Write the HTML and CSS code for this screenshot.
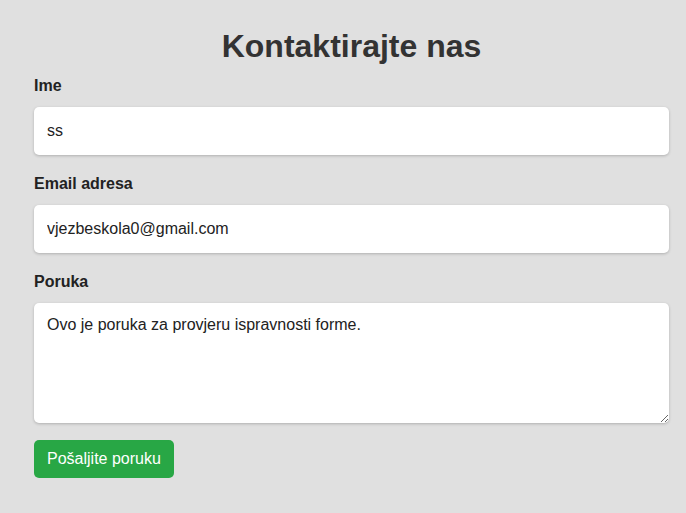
FILE: index.html
```html
<!DOCTYPE html>
<html lang="hr">
<head>
<meta charset="utf-8">
<title>Kontaktirajte nas</title>
<link rel="stylesheet" href="styles.css">
</head>
<body>
<div class="container">
  <h1 class="title">Kontaktirajte nas</h1>
  <form class="form">
    <label class="label" for="ime">Ime</label>
    <input class="field" id="ime" type="text" value="ss">
    <label class="label" for="email">Email adresa</label>
    <input class="field" id="email" type="email" value="vjezbeskola0@gmail.com">
    <label class="label" for="poruka">Poruka</label>
    <textarea class="field area" id="poruka">Ovo je poruka za provjeru ispravnosti forme.</textarea>
    <button class="btn" type="button">Pošaljite poruku</button>
  </form>
</div>
</body>
</html>
```
FILE: styles.css
```css
html, body {
  margin: 0;
  padding: 0;
  background: #e0e0e0;
}
body {
  font-family: "Liberation Sans", Arial, sans-serif;
  color: #222;
}
.container {
  width: 635px;
  padding: 28px 0 0 34px;
}
.title {
  margin: 0 0 12px 0;
  font-size: 32px;
  line-height: 37px;
  font-weight: bold;
  text-align: center;
  color: #333;
}
.form {
  display: flex;
  flex-direction: column;
  align-items: flex-start;
}
.label {
  display: block;
  font-size: 16px;
  line-height: 18px;
  font-weight: bold;
  color: #222;
  margin-bottom: 12px;
}
.field {
  box-sizing: border-box;
  width: 635px;
  height: 48px;
  margin: 0 0 20px 0;
  padding: 0 13px;
  border: none;
  border-radius: 5px;
  background: #fff;
  box-shadow: 0 1px 3px rgba(0, 0, 0, 0.22);
  font-family: "Liberation Sans", Arial, sans-serif;
  font-size: 16px;
  color: #222;
  outline: none;
}
.area {
  height: 120px;
  padding: 12px 13px;
  line-height: 20px;
  margin-bottom: 17px;
  resize: vertical;
}
.btn {
  height: 38px;
  padding: 0 13px;
  border: none;
  border-radius: 5px;
  background: #28a745;
  color: #fff;
  font-family: "Liberation Sans", Arial, sans-serif;
  font-size: 16px;
  cursor: pointer;
}
```
